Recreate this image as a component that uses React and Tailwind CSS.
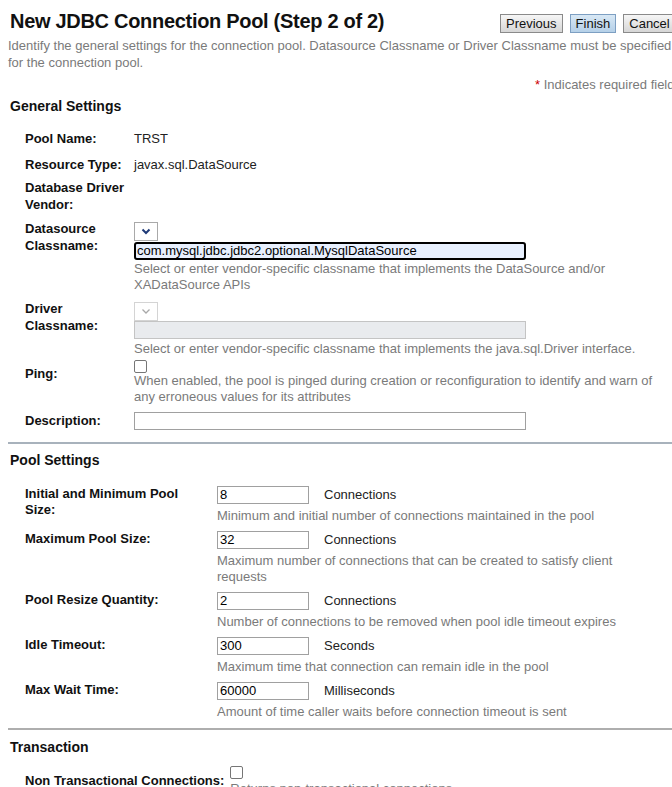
import React from 'react'

const font = { fontFamily: '"Liberation Sans", Arial, sans-serif' }

const Chevron = ({ disabled }) => (
  <svg width="10" height="7" viewBox="0 0 10 7">
    <path d="M1.5 1.5 L5 5 L8.5 1.5" fill="none" stroke={disabled ? '#a8a8a8' : '#1f3a78'} strokeWidth={disabled ? 1.3 : 2} />
  </svg>
)

const Select = ({ disabled }) => (
  <div className={`w-[24px] h-[19px] flex items-center justify-center bg-white border ${disabled ? 'border-[#d4d4d4]' : 'border-[#a9a9a9]'}`}>
    <Chevron disabled={disabled} />
  </div>
)

const Checkbox = () => (
  <div className="w-[13px] h-[13px] rounded-[2px] border border-[#767676] bg-white" />
)

const Help = ({ children }) => (
  <div className="text-[13px] leading-[16px] text-[#7a7a7a]">{children}</div>
)

const Label = ({ children, w, pt = 0 }) => (
  <div className={`${w} pl-[17px] shrink-0 text-[13px] leading-[17px] font-bold text-[#111]`} style={pt ? { paddingTop: pt } : undefined}>
    {children}
  </div>
)

const PoolRow = ({ label, value, unit, help, mt }) => (
  <div className="flex" style={{ marginTop: mt }}>
    <div className="w-[209px] pl-[17px] shrink-0 text-[13px] leading-[16px] font-bold text-[#111]">{label}</div>
    <div>
      <div className="flex items-center">
        <div className="w-[92px] h-[18px] border border-[#a0a0a0] bg-white text-[13px] leading-[16px] px-[2px] text-black">{value}</div>
        <div className="ml-[15px] text-[13px] leading-[16px] text-[#222]">{unit}</div>
      </div>
      <div className="mt-[4px]"><Help>{help}</Help></div>
    </div>
  </div>
)

export default function App() {
  return (
    <div className="w-[672px] h-[787px] overflow-hidden bg-white text-black" style={font}>
      <div className="flex items-start pl-[10px] pt-[9px]">
        <h1 className="text-[20px] leading-[24px] font-bold text-[#111] w-[490px] shrink-0 tracking-[-0.3px]">New JDBC Connection Pool (Step 2 of 2)</h1>
        <div className="flex gap-[7px] mt-[5px] whitespace-nowrap">
          <button className="h-[19px] px-[5px] text-[13px] leading-[15px] border border-[#8a8a8a] bg-gradient-to-b from-[#f6f6f6] to-[#d6d6d6] text-[#111]">Previous</button>
          <button className="h-[19px] px-[5px] text-[13px] leading-[15px] border border-[#7d9fc2] bg-gradient-to-b from-[#d8e8f5] to-[#b5d0e8] text-[#111]">Finish</button>
          <button className="h-[19px] px-[5px] text-[13px] leading-[15px] border border-[#8a8a8a] bg-gradient-to-b from-[#f6f6f6] to-[#d6d6d6] text-[#111]">Cancel</button>
        </div>
      </div>
      <div className="pl-[8px] mt-[4px] text-[13px] leading-[17px] text-[#7a7a7a] whitespace-nowrap">
        <div>Identify the general settings for the connection pool. Datasource Classname or Driver Classname must be specified</div>
        <div>for the connection pool.</div>
      </div>
      <div className="pl-[535px] mt-[6px] text-[13px] leading-[16px] text-[#7a7a7a] whitespace-nowrap">
        <span className="text-[#c00]">*</span> Indicates required field
      </div>
      <h2 className="pl-[10px] mt-[5px] text-[14px] leading-[17px] font-bold text-[#111]">General Settings</h2>

      <div className="pl-[8px]">
        <div className="flex mt-[15px]">
          <Label w="w-[126px]">Pool Name:</Label>
          <div className="text-[13px] leading-[17px] text-[#222]">TRST</div>
        </div>
        <div className="flex mt-[9px]">
          <Label w="w-[126px]">Resource Type:</Label>
          <div className="text-[13px] leading-[17px] text-[#222]">javax.sql.DataSource</div>
        </div>
        <div className="flex mt-[6px]">
          <Label w="w-[126px]">Database Driver<br />Vendor:</Label>
        </div>
        <div className="flex mt-[7px]">
          <Label w="w-[126px]">Datasource<br />Classname:</Label>
          <div className="pt-[2px]">
            <Select />
            <div className="mt-[1px] w-[392px] h-[18px] rounded-[3px] border-2 border-black bg-[#e8f0fe] text-[13px] leading-[14px] px-[1px] text-black">com.mysql.jdbc.jdbc2.optional.MysqlDataSource</div>
            <div className="mt-[1px]"><Help>Select or enter vendor-specific classname that implements the DataSource and/or<br />XADataSource APIs</Help></div>
          </div>
        </div>
        <div className="flex mt-[7px]">
          <Label w="w-[126px]">Driver<br />Classname:</Label>
          <div className="pt-[2px]">
            <Select disabled />
            <div className="w-[392px] h-[18px] border border-[#c4c4c4] bg-[#e9ebee]" />
            <div className="mt-[2px]"><Help>Select or enter vendor-specific classname that implements the java.sql.Driver interface.</Help></div>
          </div>
        </div>
        <div className="flex mt-[2px]">
          <Label w="w-[126px]" pt={6}>Ping:</Label>
          <div className="pt-[1px]">
            <Checkbox />
            <Help>When enabled, the pool is pinged during creation or reconfiguration to identify and warn of<br />any erroneous values for its attributes</Help>
          </div>
        </div>
        <div className="flex mt-[7px]">
          <Label w="w-[126px]">Description:</Label>
          <div className="w-[392px] h-[18px] border border-[#a0a0a0] bg-white" />
        </div>
      </div>

      <div className="ml-[8px] mt-[12px] h-[2px] bg-[#a8b2bc]" />
      <h2 className="pl-[10px] mt-[8px] text-[14px] leading-[17px] font-bold text-[#111]">Pool Settings</h2>

      <div className="pl-[8px]">
        <PoolRow mt={17} label={<>Initial and Minimum Pool<br />Size:</>} value="8" unit="Connections" help="Minimum and initial number of connections maintained in the pool" />
        <PoolRow mt={7} label="Maximum Pool Size:" value="32" unit="Connections" help={<>Maximum number of connections that can be created to satisfy client<br />requests</>} />
        <PoolRow mt={7} label="Pool Resize Quantity:" value="2" unit="Connections" help="Number of connections to be removed when pool idle timeout expires" />
        <PoolRow mt={7} label="Idle Timeout:" value="300" unit="Seconds" help="Maximum time that connection can remain idle in the pool" />
        <PoolRow mt={7} label="Max Wait Time:" value="60000" unit="Milliseconds" help="Amount of time caller waits before connection timeout is sent" />
      </div>

      <div className="ml-[8px] mt-[8px] h-[2px] bg-[#aeaeae]" />
      <h2 className="pl-[10px] mt-[9px] text-[14px] leading-[17px] font-bold text-[#111]">Transaction</h2>

      <div className="pl-[8px] flex mt-[9px]">
        <div className="pl-[17px] pt-[7px] text-[13px] leading-[17px] font-bold text-[#111] whitespace-nowrap">Non Transactional Connections:</div>
        <div className="ml-[6px] pt-[1px]">
          <Checkbox />
          <div className="mt-[2px]"><Help>Returns non-transactional connections</Help></div>
        </div>
      </div>
    </div>
  )
}
